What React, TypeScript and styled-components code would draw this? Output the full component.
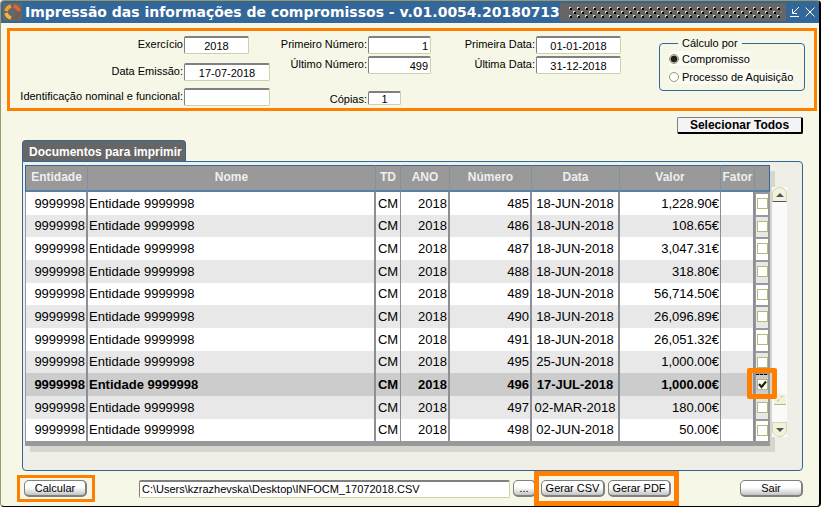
import React, { useState } from 'react';
import styled, { createGlobalStyle, css } from 'styled-components';

const ORANGE = '#ff8000';
const BLUE = '#336699';
const CREAM = '#f7f7e7';
const OLIVE = '#999966';

const GlobalStyle = createGlobalStyle`
  *, *::before, *::after { box-sizing: border-box; }
  body { margin: 0; background: #fff; }
  body, button, input { font-family: "Liberation Sans", Arial, sans-serif; font-size: 11px; color: #000; }
`;

const Window = styled.main`
  background: ${CREAM};
  border: 1px solid ${OLIVE};
  border-right: 2px solid #000;
  border-bottom: 1px solid #000;
  border-radius: 4px;
  overflow: hidden;
`;

const TitleBar = styled.header`
  display: flex;
  align-items: center;
  height: 22px;
  padding: 0 3px 0 2px;
  background: ${BLUE};
  color: #fff;
`;

const Title = styled.h1`
  margin: 0 0 0 3px;
  font: bold 14px/20px "DejaVu Sans", Verdana, sans-serif;
  white-space: nowrap;
`;

const Grip = styled.svg`
  flex: 1;
  min-width: 0;
  height: 18px;
  background: #666;
`;

const TitleButton = styled.button`
  display: flex;
  margin-left: 4px;
  padding: 0;
  border: 0;
  background: none;
`;

const Filters = styled.section`
  display: flex;
  align-items: flex-start;
  margin: 5px 2px 0 6px;
  padding: 5px 9px 1px 0;
  border: 3px solid ${ORANGE};
`;

const FieldColumn = styled.div<{ $labels: number; $width: number }>`
  display: grid;
  grid-template-columns: ${p => p.$labels}px 1fr;
  width: ${p => p.$width}px;
`;

const Label = styled.label<{ $height: number }>`
  height: ${p => p.$height}px;
  padding-right: 1px;
  line-height: 16px;
  text-align: right;
  white-space: nowrap;
`;

const TextBox = styled.input<{ $width?: number; $align?: string; $small?: boolean }>`
  width: ${p => (p.$width ? `${p.$width}px` : '100%')};
  height: ${p => (p.$small ? 14 : 18)}px;
  padding: 0 2px;
  border: 1px solid #d0d0a8;
  border-top: 2px solid #808080;
  border-left: 1px solid #808080;
  border-radius: 2px;
  background: #fff;
  text-align: ${p => p.$align ?? 'left'};
  outline: none;
`;

const RadioGroup = styled.fieldset`
  width: 146px;
  height: 54px;
  margin: 1px 0 0 auto;
  padding: 1px 9px 0;
  border: 1px solid ${BLUE};
  border-radius: 4px;
`;

const Legend = styled.legend`
  margin-left: 9px;
  padding: 0 4px;
  line-height: 13px;
`;

const RadioLabel = styled.label`
  display: flex;
  align-items: center;
  gap: 3px;
  width: max-content;
  height: 15px;
  margin-bottom: 3px;
  background: #fbfbf3;
  white-space: nowrap;
`;

const Radio = styled.input`
  appearance: none;
  width: 10px;
  height: 10px;
  margin: 0;
  border: 1px solid ${OLIVE};
  border-radius: 50%;
  background: #fff;
  &:checked { background: radial-gradient(circle, #222 3px, #fff 4px); }
`;

const Actions = styled.div`
  display: flex;
  justify-content: flex-end;
  padding: 6px 16px 6px;
`;

const SelectAll = styled.button`
  width: 126px;
  height: 17px;
  padding: 0;
  border: 1px solid #808080;
  border-right: 2px solid #000;
  border-bottom: 2px solid #000;
  border-radius: 2px;
  background: #f4f4f4;
  font-size: 12px;
  font-weight: bold;
  line-height: 14px;
`;

const Tab = styled.h2`
  width: 164px;
  height: 21px;
  margin: 0 0 0 21px;
  padding-left: 6px;
  border: 1px solid ${BLUE};
  border-bottom: 0;
  border-radius: 4px 4px 0 0;
  background: #666;
  color: #fff;
  font-size: 12px;
  line-height: 22px;
  white-space: nowrap;
`;

const Panel = styled.section`
  display: flex;
  margin: 0 16px 0 21px;
  padding: 3px 15px 24px 2px;
  border: 1px solid ${BLUE};
  border-radius: 0 4px 4px 4px;
  background: #efefe7;
`;

const TableArea = styled.div`
  flex: 1;
  min-width: 0;
  box-shadow: 5px 6px 0 0 #d6d6ce;
`;

const Table = styled.table`
  width: 100%;
  table-layout: fixed;
  border-collapse: separate;
  border-spacing: 0;
  border-bottom: 5px solid #999;
  background: #999;
  font-size: 13px;
`;

const HeadCell = styled.th`
  height: 27px;
  padding: 0 0 2px;
  border-top: 1px solid ${BLUE};
  border-bottom: 2px solid #5580aa;
  border-right: 1px solid #8090a0;
  background: #999;
  color: #eee;
  font-size: 12px;
  white-space: nowrap;
  &:first-child { border-left: 1px solid ${BLUE}; }
  &:last-child { border-right-color: ${BLUE}; }
`;

const Row = styled.tr<{ $selected: boolean }>`
  height: 23px;
  background: #fff;
  &:nth-child(3n + 2) { height: 22px; }
  &:nth-child(even) { background: #e8e8e8; }
  ${p => p.$selected && css`
    && { background: #ccc; font-weight: bold; }
  `}
`;

const Cell = styled.td<{ $align?: string; $thin?: boolean }>`
  padding: 0 1px;
  border-right: ${p => (p.$thin ? 1 : 2)}px solid #8c9096;
  line-height: 20px;
  text-align: ${p => p.$align ?? 'right'};
  white-space: nowrap;
  &:first-child { border-left: 1px solid #999; }
`;

const CheckCell = styled.td`
  position: relative;
  padding: 0;
  border-top: 2px solid #999;
  border-right: 2px solid #999;
  border-left: 1px solid #999;
`;

const CheckBox = styled.input`
  appearance: none;
  display: block;
  width: 11px;
  height: 11px;
  margin: 0 0 2px 1px;
  border: 1px solid #b8b878;
  background: #fff;
  &:checked {
    background: #fff url("data:image/svg+xml,%3Csvg xmlns='http://www.w3.org/2000/svg' viewBox='0 0 9 9'%3E%3Cpath d='M1 4l2.5 3L8 1.500' fill='none' stroke='%23222' stroke-width='2.200'/%3E%3C/svg%3E");
  }
`;

const Marker = styled.span`
  position: absolute;
  inset: -7px -9px -3px;
  border: 5px solid ${ORANGE};
  border-radius: 2px;
  pointer-events: none;
  z-index: 1;
  &::after {
    content: "";
    position: absolute;
    top: 1px;
    left: 4px;
    right: 5px;
    border-top: 1px dashed #000;
  }
`;

const ScrollBar = styled.div`
  display: flex;
  flex-direction: column;
  align-items: center;
  width: 15px;
  margin: 22px 0 9px 2px;
  background: #fafafa;
`;

const ScrollButton = styled.button<{ $down?: boolean }>`
  display: flex;
  align-items: center;
  justify-content: center;
  width: 15px;
  height: 15px;
  padding: 0;
  border: 1px solid #d6d6b4;
  border-bottom-color: ${p => (p.$down ? '#d6d6b4' : '#555')};
  border-radius: ${p => (p.$down ? '0 0 7px 7px' : '7px 7px 0 0')};
  background: #f2f2dc;
`;

const Thumb = styled.svg`
  display: block;
  margin: auto 0 17px;
  background: #f2f2dc;
  border-bottom: 1px solid #b8b878;
`;

const Footer = styled.footer`
  display: flex;
  align-items: center;
  height: 35px;
  padding: 0 16px;
`;

const Highlight = styled.div<{ $wide?: boolean }>`
  position: relative;
  display: flex;
  gap: 3px;
  margin-left: ${p => (p.$wide ? -2 : 0)}px;
  padding: ${p => (p.$wide ? '4px 3px 4px 2px' : '2px 5px 2px 4px')};
  border: ${p => (p.$wide ? 5 : 3)}px solid ${ORANGE};
`;

const PushButton = styled.button<{ $width?: number }>`
  width: ${p => p.$width ?? 63}px;
  height: 17px;
  padding: 0;
  border: 1px solid #808080;
  border-right-width: 2px;
  border-bottom-width: 2px;
  border-radius: 5px;
  background: linear-gradient(#fff 45%, #c4c4c4);
  line-height: 15px;
  white-space: nowrap;
`;

const PathBox = styled.div`
  flex: 1;
  margin: 0 3px 0 44px;
  display: flex;
`;

const Spacer = styled.div`
  flex: 0 0 61px;
`;

const columns = [
  { name: 'Entidade', width: 63 },
  { name: 'Nome' },
  { name: 'TD', width: 25 },
  { name: 'ANO', width: 49 },
  { name: 'Número', width: 82 },
  { name: 'Data', width: 88 },
  { name: 'Valor', width: 101 },
  { name: 'Fator', width: 34 },
  { name: '', width: 15 },
];

const documents: [number, string, string][] = [
  [485, '18-JUN-2018', '1,228.90€'],
  [486, '18-JUN-2018', '108.65€'],
  [487, '18-JUN-2018', '3,047.31€'],
  [488, '18-JUN-2018', '318.80€'],
  [489, '18-JUN-2018', '56,714.50€'],
  [490, '18-JUN-2018', '26,096.89€'],
  [491, '18-JUN-2018', '26,051.32€'],
  [495, '25-JUN-2018', '1,000.00€'],
  [496, '17-JUL-2018', '1,000.00€'],
  [497, '02-MAR-2018', '180.00€'],
  [498, '02-JUN-2018', '50.00€'],
];

function Logo() {
  return (
    <svg width="19" height="18" viewBox="0 0 19 18" aria-hidden="true">
      <rect width="19" height="18" fill="#666" />
      <g fill="none" strokeWidth="3.500">
        <path d="M8 3A7 7 0 0 0 3 8" stroke="#f0a030" />
        <path d="M10.500 3A7 7 0 0 1 16 8" stroke="#e8602c" />
        <path d="M3 10A7 7 0 0 0 8 15" stroke="#f0b838" />
        <path d="M16 10A7 7 0 0 1 11 15" stroke="#7a5a50" />
      </g>
    </svg>
  );
}

export default function App() {
  const [mode, setMode] = useState('compromisso');
  const [checked, setChecked] = useState<number[]>([496]);
  const toggle = (id: number) =>
    setChecked(list => (list.includes(id) ? list.filter(n => n !== id) : [...list, id]));

  return (
    <>
      <GlobalStyle />
      <Window>
        <TitleBar>
          <Logo />
          <Title>Impressão das informações de compromissos - v.01.0054.20180713</Title>
          <Grip aria-hidden="true">
            <defs>
              <pattern id="dots" width="8" height="8" patternUnits="userSpaceOnUse">
                <path d="M1 1h2v2h-2zM5 5h2v2h-2z" fill="#000" />
                <path d="M0 0h2v1h-1v1h-1zM4 4h2v1h-1v1h-1z" fill="#e0e0c0" />
              </pattern>
            </defs>
            <svg x="9" y="4" width="94%" height="11">
              <rect width="100%" height="11" fill="url(#dots)" />
            </svg>
          </Grip>
          <TitleButton aria-label="Minimizar">
            <svg width="10" height="12" viewBox="0 0 10 12" fill="none" stroke="#fff">
              <path d="M9 1L3 7M2.500 3v4.500H7M0 10.500h9" />
            </svg>
          </TitleButton>
          <TitleButton aria-label="Fechar">
            <svg width="12" height="12" viewBox="0 0 12 12" fill="none" stroke="#fff">
              <path d="M1.500 1.500l9 9M10.500 1.500l-9 9" />
            </svg>
          </TitleButton>
        </TitleBar>

        <Filters>
          <FieldColumn $labels={174} $width={260}>
            <Label htmlFor="exercicio" $height={27}>Exercício</Label>
            <TextBox id="exercicio" $width={65} $align="center" defaultValue="2018" />
            <Label htmlFor="emissao" $height={25}>Data Emissão:</Label>
            <TextBox id="emissao" $align="center" defaultValue="17-07-2018" />
            <Label htmlFor="identificacao" $height={18}>Identificação nominal e funcional:</Label>
            <TextBox id="identificacao" />
          </FieldColumn>
          <FieldColumn $labels={98} $width={161}>
            <Label htmlFor="primeiroNumero" $height={20}>Primeiro Número:</Label>
            <TextBox id="primeiroNumero" $align="right" defaultValue="1" />
            <Label htmlFor="ultimoNumero" $height={35}>Último Número:</Label>
            <TextBox id="ultimoNumero" $align="right" defaultValue="499" />
            <Label htmlFor="copias" $height={16}>Cópias:</Label>
            <TextBox id="copias" $small $width={33} $align="center" defaultValue="1" />
          </FieldColumn>
          <FieldColumn $labels={105} $width={190}>
            <Label htmlFor="primeiraData" $height={20}>Primeira Data:</Label>
            <TextBox id="primeiraData" $align="center" defaultValue="01-01-2018" />
            <Label htmlFor="ultimaData" $height={20}>Última Data:</Label>
            <TextBox id="ultimaData" $align="center" defaultValue="31-12-2018" />
          </FieldColumn>
          <RadioGroup>
            <Legend>Cálculo por</Legend>
            <RadioLabel>
              <Radio type="radio" name="modo" checked={mode === 'compromisso'} onChange={() => setMode('compromisso')} />
              Compromisso
            </RadioLabel>
            <RadioLabel>
              <Radio type="radio" name="modo" checked={mode === 'aquisicao'} onChange={() => setMode('aquisicao')} />
              Processo de Aquisição
            </RadioLabel>
          </RadioGroup>
        </Filters>

        <Actions>
          <SelectAll onClick={() => setChecked(documents.map(d => d[0]))}>Selecionar Todos</SelectAll>
        </Actions>

        <Tab>Documentos para imprimir</Tab>
        <Panel>
          <TableArea>
            <Table>
              <colgroup>
                {columns.map(c => <col key={c.name} width={c.width} />)}
              </colgroup>
              <thead>
                <tr>{columns.map(c => <HeadCell key={c.name} scope="col">{c.name}</HeadCell>)}</tr>
              </thead>
              <tbody>
                {documents.map(([id, date, value]) => (
                  <Row key={id} $selected={id === 496}>
                    <Cell>9999998</Cell>
                    <Cell $align="left">Entidade 9999998</Cell>
                    <Cell $align="center" $thin>CM</Cell>
                    <Cell>2018</Cell>
                    <Cell>{id}</Cell>
                    <Cell $align="center">{date}</Cell>
                    <Cell $thin>{value}</Cell>
                    <Cell />
                    <CheckCell>
                      <CheckBox
                        type="checkbox"
                        aria-label={`Imprimir ${id}`}
                        checked={checked.includes(id)}
                        onChange={() => toggle(id)}
                      />
                      {id === 496 && <Marker />}
                    </CheckCell>
                  </Row>
                ))}
              </tbody>
            </Table>
          </TableArea>
          <ScrollBar>
            <ScrollButton aria-label="Subir">
              <svg width="8" height="4"><path d="M0 4l4-4 4 4z" fill="#555" /></svg>
            </ScrollButton>
            <Thumb width="12" height="11" viewBox="0 0 12 11" stroke="#a0a070">
              <path d="M3 8l2-2M7 4l2-2" />
            </Thumb>
            <ScrollButton $down aria-label="Descer">
              <svg width="8" height="4"><path d="M0 0l4 4 4-4z" fill="#555" /></svg>
            </ScrollButton>
          </ScrollBar>
        </Panel>

        <Footer>
          <Highlight>
            <PushButton>Calcular</PushButton>
          </Highlight>
          <PathBox>
            <TextBox aria-label="Ficheiro" defaultValue="C:\Users\kzrazhevska\Desktop\INFOCM_17072018.CSV" />
          </PathBox>
          <PushButton $width={23} aria-label="Procurar">...</PushButton>
          <Highlight $wide>
            <PushButton $width={64}>Gerar CSV</PushButton>
            <PushButton>Gerar PDF</PushButton>
          </Highlight>
          <Spacer />
          <PushButton>Sair</PushButton>
        </Footer>
      </Window>
    </>
  );
}
